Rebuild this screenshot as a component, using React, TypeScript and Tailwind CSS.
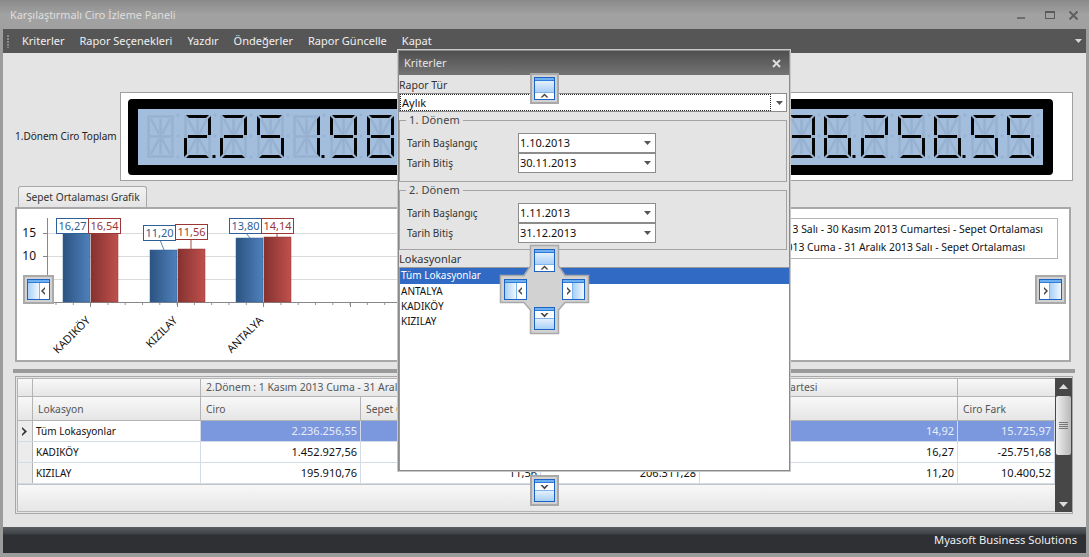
import React from 'react';

const FONT = "font-['Noto_Sans',sans-serif]";

// 7 segment map for the lcd control, the ghost layer draws all 14 segments
const SEGMENTS: Record<string, string> = {
  '0': 'abcdef',
  '1': 'bc',
  '2': 'abged',
  '3': 'abgcd',
  '4': 'fgbc',
  '5': 'afgcd',
  '6': 'afgedc',
  '7': 'abc',
  '8': 'abcdefg',
  '9': 'abcdfg',
  ' ': '',
};

const SEG_POINTS: Record<string, string> = {
  a: '2,0 25,0 22,3 5,3',
  b: '27,1 27,20 24,20 24,4',
  c: '27,23 27,42 24,39 24,23',
  d: '2,43 25,43 22,40 5,40',
  e: '0,23 0,42 3,39 3,23',
  f: '0,1 0,20 3,20 3,4',
  g: '4,20 23,20 23,23 4,23',
};

function LcdDigit({ ch, dot }: { ch: string; dot?: boolean }) {
  const on = SEGMENTS[ch] ?? '';
  return (
    <svg width="36.6" height="50" viewBox="-1 -3 36.6 50" className="shrink-0">
      <g stroke="#97b1d1" strokeWidth="2.5" fill="none">
        <path d="M4 4 L12 19 M23 4 L15 19 M4 39 L12 24 M23 39 L15 24 M13.5 4 V39" />
        <rect x="1.5" y="1.5" width="24" height="40" />
        <path d="M3 21.5 H24" />
      </g>
      <g fill="#96b1d1">
        <circle cx="31" cy="0" r="1.5" />
        <circle cx="31" cy="21" r="1.5" />
        {!dot && <circle cx="31" cy="42" r="1.5" />}
      </g>
      {Object.keys(SEG_POINTS).map((k) =>
        on.includes(k) ? <polygon key={k} points={SEG_POINTS[k]} fill="#050505" /> : null
      )}
      {dot && <rect x="28.5" y="40" width="3" height="3" fill="#050505" />}
    </svg>
  );
}

function LcdNumber({ text }: { text: string }) {
  const cells: { ch: string; dot: boolean }[] = [];
  for (const c of text) {
    if (c === '.') cells[cells.length - 1].dot = true;
    else cells.push({ ch: c, dot: false });
  }
  return (
    <div className="flex" role="img" aria-label={text.trim()}>
      {cells.map((c, i) => (
        <LcdDigit key={i} ch={c.ch} dot={c.dot} />
      ))}
    </div>
  );
}

function Arrow({ className = '' }: { className?: string }) {
  return (
    <svg width="7" height="4" viewBox="0 0 7 4" className={className}>
      <path d="M0 0 H7 L3.5 4 Z" fill="#555" />
    </svg>
  );
}

type Dock = 'top' | 'bottom' | 'left' | 'right';

// one docking guide glyph, 21x23 upright and 23x21 for the side ones
function DockGlyph({ side }: { side: Dock }) {
  const upright = side === 'top' || side === 'bottom';
  const w = upright ? 21 : 23;
  const h = upright ? 23 : 21;
  return (
    <svg width={w} height={h} viewBox={`0 0 ${w} ${h}`} className="block">
      <defs>
        <linearGradient id="dockV" x1="0" y1="0" x2="0" y2="1">
          <stop offset="0" stopColor="#e4f0fd" />
          <stop offset="1" stopColor="#a9d0f7" />
        </linearGradient>
        <linearGradient id="dockH" x1="0" y1="0" x2="1" y2="0">
          <stop offset="0" stopColor="#a9d0f7" />
          <stop offset="1" stopColor="#f0f7fe" />
        </linearGradient>
      </defs>
      <rect x="0.5" y="0.5" width={w - 1} height={h - 1} fill="#fff" stroke="#1c63c4" />
      <rect x="1" y="1" width={w - 2} height="2" fill="#6fb0f0" />
      <rect x="1" y="3" width={w - 2} height="1" fill="#2f7bd8" />
      {side === 'top' && (
        <>
          <rect x="1" y="4" width="19" height="11" fill="url(#dockV)" />
          <rect x="1" y="15" width="19" height="1" fill="#7fb4ea" />
          <path d="M10.5 16.5 L14.5 20.5 H12.5 L10.5 18.5 L8.5 20.5 H6.5 Z" fill="#444" />
        </>
      )}
      {side === 'bottom' && (
        <>
          <rect x="1" y="12" width="19" height="10" fill="url(#dockV)" />
          <rect x="1" y="11" width="19" height="1" fill="#7fb4ea" />
          <path d="M10.5 10.5 L14.5 6 H12.5 L10.5 8 L8.5 6 H6.5 Z" fill="#444" />
        </>
      )}
      {side === 'left' && (
        <>
          <rect x="1" y="4" width="11" height="16" fill="url(#dockH)" />
          <rect x="12" y="4" width="1" height="16" fill="#7fb4ea" />
          <path d="M14 12 L18 8 V10 L16 12 L18 14 V16 Z" fill="#444" />
        </>
      )}
      {side === 'right' && (
        <>
          <rect x="11" y="4" width="11" height="16" fill="url(#dockH)" />
          <rect x="10" y="4" width="1" height="16" fill="#7fb4ea" />
          <path d="M9 12 L5 8 V10 L7 12 L5 14 V16 Z" fill="#444" />
        </>
      )}
    </svg>
  );
}

function DockButton({ side, className }: { side: Dock; className: string }) {
  return (
    <div className={`absolute flex items-center justify-center bg-[#d2d2d2] border-2 border-[#a9a9a9] ${className}`}>
      <DockGlyph side={side} />
    </div>
  );
}

function DockCross() {
  return (
    <div className="absolute left-[499px] top-[244px] w-[91px] h-[91px]">
      <svg width="91" height="91" viewBox="499 244 91 91" className="absolute left-0 top-0">
        <polygon
          points="530.5,245.5 558.5,245.5 558.5,266 565,275.5 588.5,275.5 588.5,302.5 565,302.5 558.5,310 558.5,333.5 530.5,333.5 530.5,310 524,302.5 500.5,302.5 500.5,275.5 524,275.5 530.5,266"
          fill="#d2d2d2"
          stroke="#a9a9a9"
          strokeWidth="1.5"
        />
      </svg>
      <div className="absolute left-[35px] top-[5px]"><DockGlyph side="top" /></div>
      <div className="absolute left-[5px] top-[35px]"><DockGlyph side="left" /></div>
      <div className="absolute left-[63px] top-[35px]"><DockGlyph side="right" /></div>
      <div className="absolute left-[35px] top-[63px]"><DockGlyph side="bottom" /></div>
    </div>
  );
}

function DateBox({ value }: { value: string }) {
  return (
    <div className="w-[138px] h-[20px] bg-white border border-[#8c8c8c] flex items-center justify-between pl-px pr-[4px] text-[11px] text-[#111]">
      <span>{value}</span>
      <Arrow />
    </div>
  );
}

function Group({ title, from, to, h }: { title: string; from: string; to: string; h: string }) {
  return (
    <fieldset className={`border border-[#a3a3a3] mr-[2px] pl-[7px] ${h}`}>
      <legend className="-ml-px px-[3px] text-[11px] leading-[14px] text-[#444] tracking-[0.1px]">{title}</legend>
      <div className="grid grid-cols-[111px_138px] mt-[6px] items-center text-[10px] text-[#333]">
        <span>Tarih Başlangıç</span>
        <DateBox value={from} />
        <span>Tarih Bitiş</span>
        <DateBox value={to} />
      </div>
    </fieldset>
  );
}

function CriteriaDialog() {
  return (
    <div className="absolute left-[398px] top-[50px] w-[392px] h-[421px] border border-[#8a8a8a] outline outline-1 outline-[#c8c8c8] bg-[#e4e4e4] flex flex-col">
      <div className="h-[24px] shrink-0 bg-gradient-to-b from-[#4f4f4f] to-[#747474] flex items-center justify-between pl-[5px] pr-[8px] text-[11px] text-[#e6e6e6]">
        <span>Kriterler</span>
        <svg width="9" height="9" viewBox="0 0 9 9"><path d="M1 1 L8 8 M8 1 L1 8" stroke="#dedede" strokeWidth="2" /></svg>
      </div>
      <div className="text-[10.5px] leading-[16px] text-[#333] mt-[2px]">Rapor Tür</div>
      <div className="h-[19px] shrink-0 bg-white border border-[#8c8c8c] flex items-center mr-[2px] pr-[3px] text-[11px] text-[#111] justify-between">
        <span className="flex-1 border border-dotted border-[#222] h-[17px] leading-[15px] pl-px mr-[5px]">Aylık</span>
        <Arrow />
      </div>
      <div className="h-[1px] shrink-0" />
      <Group title="1. Dönem" from="1.10.2013" to="30.11.2013" h="h-[69px]" />
      <Group title="2. Dönem" from="1.11.2013" to="31.12.2013" h="h-[67px] mt-[1px]" />
      <div className="text-[11px] leading-[16px] text-[#333] mt-[1px]">Lokasyonlar</div>
      <div className="flex-1 bg-white border-l border-t border-[#9a9a9a] text-[10px] text-[#111] overflow-hidden">
        <div className="h-[16px] leading-[15px] bg-[#316ac5] text-white pl-px">Tüm Lokasyonlar</div>
        {['ANTALYA', 'KADIKÖY', 'KIZILAY'].map((n) => (
          <div key={n} className="h-[15px] leading-[15px] pl-px">{n}</div>
        ))}
      </div>
    </div>
  );
}

const BLUE = '#2f5f97';
const RED = '#9a3735';

const BARS = [
  { name: 'KADIKÖY', tick: 90, v1: '16,27', v2: '16,54', top1: 222, top2: 222, lab1: [56, 218], lab2: [88, 218] },
  { name: 'KIZILAY', tick: 177, v1: '11,20', v2: '11,56', top1: 250, top2: 249, lab1: [143, 225], lab2: [175, 224] },
  { name: 'ANTALYA', tick: 263, v1: '13,80', v2: '14,14', top1: 238, top2: 237, lab1: [229, 218], lab2: [261, 218] },
];

function ChartLabel({ x, y, color, text }: { x: number; y: number; color: string; text: string }) {
  return (
    <g>
      <rect x={x + 0.5} y={y + 0.5} width="32" height="15" fill="#fff" stroke={color} />
      <text x={x + 16.5} y={y + 12} textAnchor="middle" fontSize="11" fill={color} fontFamily="Noto Sans, sans-serif">{text}</text>
    </g>
  );
}

function BarChart() {
  const minor: number[] = [];
  for (let x = 56; x < 700; x += 17.3) minor.push(x);
  return (
    <svg width="1052" height="151" viewBox="17 209 1052 151" className="block">
      <defs>
        <linearGradient id="barBlue" x1="0" y1="0" x2="1" y2="0">
          <stop offset="0" stopColor="#2c5380" />
          <stop offset="1" stopColor="#4f81bd" />
        </linearGradient>
        <linearGradient id="barRed" x1="0" y1="0" x2="1" y2="0">
          <stop offset="0" stopColor="#853230" />
          <stop offset="1" stopColor="#c0504d" />
        </linearGradient>
      </defs>
      {[233, 256, 279].map((y) => (
        <line key={y} x1="47" x2="700" y1={y + 0.5} y2={y + 0.5} stroke="#dadada" />
      ))}
      <line x1="47.5" x2="47.5" y1="218" y2="303" stroke="#888" />
      <line x1="47" x2="700" y1="302.5" y2="302.5" stroke="#888" />
      {[233, 256, 279, 302].map((y) => (
        <line key={y} x1="43" x2="47" y1={y + 0.5} y2={y + 0.5} stroke="#888" />
      ))}
      {minor.map((x) => (
        <line key={x} x1={x} x2={x} y1="303" y2="305" stroke="#999" />
      ))}
      {[90, 177, 263, 350, 437, 523, 610, 697].map((x) => (
        <line key={x} x1={x + 0.5} x2={x + 0.5} y1="303" y2="307" stroke="#888" />
      ))}
      <text x="36" y="237" textAnchor="end" fontSize="12" fill="#111" fontFamily="Noto Sans, sans-serif">15</text>
      <text x="36" y="260" textAnchor="end" fontSize="12" fill="#111" fontFamily="Noto Sans, sans-serif">10</text>
      {BARS.map((b) => (
        <g key={b.name}>
          <rect x={b.tick - 27} y={b.top1} width="27" height={302 - b.top1} fill="url(#barBlue)" stroke="#2f5f97" strokeWidth="0.5" />
          <rect x={b.tick + 1} y={b.top2} width="27" height={302 - b.top2} fill="url(#barRed)" stroke="#8e3431" strokeWidth="0.5" />
          <line x1={b.lab1[0] + 17} y1={b.lab1[1] + 15} x2={b.tick - 13} y2={b.top1} stroke="#5b86bb" />
          <line x1={b.lab2[0] + 16} y1={b.lab2[1] + 15} x2={b.tick + 14} y2={b.top2} stroke="#a84a47" />
          <ChartLabel x={b.lab1[0]} y={b.lab1[1]} color={BLUE} text={b.v1} />
          <ChartLabel x={b.lab2[0]} y={b.lab2[1]} color={RED} text={b.v2} />
          <text
            transform={`translate(${b.tick + 1} 321) rotate(-45)`}
            textAnchor="end"
            fontSize="11"
            fill="#111"
            fontFamily="Noto Sans, sans-serif"
          >
            {b.name}
          </text>
        </g>
      ))}
    </svg>
  );
}

const COLS = 'grid grid-cols-[15px_168px_160px_180px_159px_258px_97px]';
const HEAD_BG = 'bg-gradient-to-b from-[#f8f8f8] to-[#e6e6e6]';

const ROWS = [
  { name: 'Tüm Lokasyonlar', c2: '2.236.256,55', s2: '', c1: '2.251.982,52', s1: '14,92', fark: '15.725,97', active: true },
  { name: 'KADIKÖY', c2: '1.452.927,56', s2: '16,54', c1: '1.427.175,88', s1: '16,27', fark: '-25.751,68' },
  { name: 'KIZILAY', c2: '195.910,76', s2: '11,56', c1: '206.311,28', s1: '11,20', fark: '10.400,52' },
];

function DataGrid() {
  return (
    <div className="h-[138px] w-[1058px] shrink-0 border border-[#a8a8a8] pl-px py-px flex">
      <div className="flex-1 flex flex-col bg-[#f2f2f2] border-l border-y border-[#b4b4b4] min-w-0 text-[11px]">
        <div className={`${COLS} h-[18px] shrink-0 text-[10.4px] text-[#555] border-b border-[#b4b4b4] ${HEAD_BG}`}>
          <div className="border-r border-[#b4b4b4]" />
          <div className="border-r border-[#b4b4b4]" />
          <div className="col-span-2 border-r border-[#b4b4b4] pl-[5px] leading-[17px] whitespace-nowrap overflow-hidden">2.Dönem : 1 Kasım 2013 Cuma - 31 Aralık 2013 Salı</div>
          <div className="col-span-2 border-r border-[#b4b4b4] pl-[13px] leading-[17px] whitespace-nowrap overflow-hidden">1.Dönem : 1 Ekim 2013 Salı - 30 Kasım 2013 Cumartesi</div>
          <div />
        </div>
        <div className={`${COLS} h-[24px] shrink-0 text-[10.3px] text-[#555] border-b border-[#b4b4b4] ${HEAD_BG}`}>
          <div className="border-r border-[#b4b4b4]" />
          {['Lokasyon', 'Ciro', 'Sepet Ortalaması', 'Ciro', 'Sepet Ortalaması', 'Ciro Fark'].map((h, i) => (
            <div key={i} className="border-r border-[#b4b4b4] last:border-r-0 pl-[5px] leading-[24px]">{h}</div>
          ))}
        </div>
        {ROWS.map((r) => {
          const val = `text-right pr-[3px] border-r border-[#d3dbe6] leading-[20px] ${r.active ? 'bg-[#7b98de] text-[#e8edf8]' : 'bg-white text-[#111]'}`;
          return (
            <div key={r.name} className={`${COLS} h-[21px] shrink-0 border-b border-[#d3dbe6]`}>
              <div className="border-r border-[#b4b4b4] bg-[#ececec] flex items-center justify-center">
                {r.active && (
                  <svg width="6" height="9" viewBox="0 0 6 9"><path d="M0 0 L5 4.5 L0 9 V7 L2.5 4.5 L0 2 Z" fill="#333" /></svg>
                )}
              </div>
              <div className="bg-white text-[#111] text-[10px] pl-[3px] leading-[20px] border-r border-[#d3dbe6]">{r.name}</div>
              <div className={val}>{r.c2}</div>
              <div className={val}>{r.s2}</div>
              <div className={val}>{r.c1}</div>
              <div className={val}>{r.s1}</div>
              <div className={val}>{r.fark}</div>
            </div>
          );
        })}
        <div className={`flex-1 ${HEAD_BG} border-t border-[#c4c4c4]`} />
      </div>
      <div className="w-[17px] shrink-0 bg-[#474747] flex flex-col items-center">
        <svg width="9" height="5" viewBox="0 0 9 5" className="mt-[6px] mb-[7px] shrink-0"><path d="M0 5 L4.5 0 L9 5 Z" fill="#dcdcdc" /></svg>
        <div className="w-[15px] h-[59px] rounded-[2px] bg-gradient-to-r from-[#f0f0f0] to-[#b8b8b8] flex flex-col items-center justify-center gap-px">
          <div className="w-[9px] h-px bg-[#777]" />
          <div className="w-[9px] h-px bg-[#777]" />
          <div className="w-[9px] h-px bg-[#777]" />
          <div className="w-[9px] h-px bg-[#777]" />
        </div>
        <div className="flex-1" />
        <svg width="9" height="5" viewBox="0 0 9 5" className="mb-[5px] shrink-0"><path d="M0 0 L4.5 5 L9 0 Z" fill="#dcdcdc" /></svg>
      </div>
    </div>
  );
}

export default function App() {
  return (
    <div className={`relative w-[1089px] h-[557px] overflow-hidden bg-[#9c9c9c] flex flex-col ${FONT}`}>
      {/* title bar */}
      <div className="h-[29px] shrink-0 border-t border-[#8a8a8a] bg-gradient-to-b from-[#8c8c8c] via-[#a2a2a2] to-[#a0a0a0] flex items-center pl-[10px] pr-[11px] text-[10.8px] text-[#dedede]">
        <span className="flex-1">Karşılaştırmalı Ciro İzleme Paneli</span>
        <svg width="8" height="3" viewBox="0 0 8 3" className="mt-[6px] mr-[20px]"><rect width="8" height="2" fill="#6e6e6e" /></svg>
        <svg width="10" height="8" viewBox="0 0 10 8" className="mr-[14px]"><rect x="0.5" y="0.5" width="9" height="7" fill="none" stroke="#5a5a5a" /><rect width="10" height="2" fill="#5a5a5a" /></svg>
        <svg width="9" height="9" viewBox="0 0 9 9"><path d="M0.5 0.5 L8.5 8.5 M8.5 0.5 L0.5 8.5" stroke="#5f5f5f" strokeWidth="2" /></svg>
      </div>

      {/* menu */}
      <div className="mx-[3px] h-[24px] shrink-0 bg-[#565656] flex items-center text-[11px] text-[#f0f0f0] pl-[4px] pr-[4px]">
        <div className="w-[2px] h-[13px] mr-[13px] bg-[repeating-linear-gradient(to_bottom,#8a8a8a_0,#8a8a8a_2px,transparent_2px,transparent_3px)]" />
        <div className="flex gap-[15px] flex-1">
          {['Kriterler', 'Rapor Seçenekleri', 'Yazdır', 'Öndeğerler', 'Rapor Güncelle', 'Kapat'].map((m) => (
            <span key={m}>{m}</span>
          ))}
        </div>
        <svg width="7" height="4" viewBox="0 0 7 4"><path d="M0 0 H7 L3.5 4 Z" fill="#d8d8d8" /></svg>
      </div>

      {/* content */}
      <div className="mx-[3px] flex-1 min-h-0 bg-[#e4e4e4] pl-[12px] flex flex-col">
        <div className="flex items-center mt-[39px] h-[89px] shrink-0">
          <div className="w-[105px] text-[10px] text-[#222] whitespace-nowrap">1.Dönem Ciro Toplam</div>
          <div className="w-[953px] h-[89px] bg-white border border-[#a0a0a0] pl-[7px] pr-[19px] pt-[6px] flex items-start">
            <div className="flex-1 h-[76px] bg-[#a3bddc] border-[10px] border-black rounded-[4px] flex items-center justify-between pl-[8px] overflow-hidden">
              <LcdNumber text=" 2.251.982.52" />
              <LcdNumber text="2.236.256.55" />
            </div>
          </div>
        </div>

        <div className="mt-[5px] ml-[3px] w-[129px] h-[21px] shrink-0 rounded-t-[3px] border border-b-0 border-[#a8a8a8] bg-gradient-to-b from-[#f2f2f2] to-[#e4e4e4] text-[10.2px] text-[#333] pl-[7px] leading-[20px] whitespace-nowrap">
          Sepet Ortalaması Grafik
        </div>
        <div className="relative w-[1056px] h-[155px] shrink-0 bg-white border-2 border-[#a8a8a8]">
          <BarChart />
          <div className="absolute right-[11px] top-[9px] h-[41px] border border-[#b4b4b4] bg-white pl-[8px] pr-[14px] text-[10.4px] leading-[18px] text-[#111] whitespace-nowrap py-[1px]">
            <div>1.Dönem : 1 Ekim 2013 Salı - 30 Kasım 2013 Cumartesi - Sepet Ortalaması</div>
            <div>2.Dönem : 1 Kasım 2013 Cuma - 31 Aralık 2013 Salı - Sepet Ortalaması</div>
          </div>
        </div>

        <div className="h-[4px] w-[1062px] -ml-[2px] mt-[7px] mb-[3px] shrink-0 bg-[#9a9a9a]" />
        <DataGrid />
      </div>

      {/* status */}
      <div className="mx-[3px] h-[26px] shrink-0 bg-[linear-gradient(to_bottom,#5a5f64_0,#3e4145_7px,#2f3034_8px,#2f3034_100%)] flex items-center justify-end pr-[9px] text-[11.2px] text-[#eeeeee]">
        Myasoft Business Solutions
      </div>
      <div className="h-[4px] shrink-0" />

      <CriteriaDialog />
      <DockButton side="top" className="left-[530px] top-[73px] w-[29px] h-[31px]" />
      <DockCross />
      <DockButton side="bottom" className="left-[530px] top-[475px] w-[29px] h-[31px]" />
      <DockButton side="left" className="left-[23px] top-[275px] w-[31px] h-[29px]" />
      <DockButton side="right" className="left-[1035px] top-[275px] w-[31px] h-[29px]" />
    </div>
  );
}
